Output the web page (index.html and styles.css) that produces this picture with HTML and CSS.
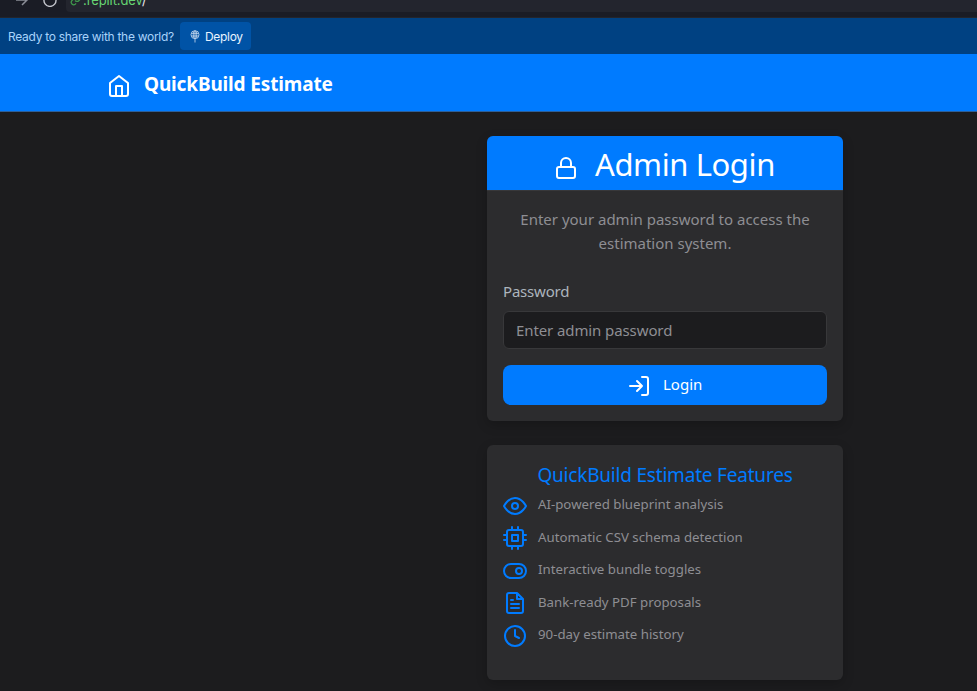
FILE: index.html
```
<!DOCTYPE html>
<html lang="en">
<head>
<meta charset="utf-8">
<title>QuickBuild Estimate</title>
<link rel="stylesheet" href="styles.css">
</head>
<body>
<div class="browser">
  <svg class="nav-arrow" width="14" height="14" viewBox="0 0 14 14"><path d="M1 7h11M7 2l5 5-5 5"/></svg>
  <svg class="reload" width="14" height="14" viewBox="0 0 14 14"><path d="M1.300 5.500a6 6 0 1 0 11.500.4"/></svg>
  <div class="address">
    <svg class="link" width="12" height="12" viewBox="0 0 24 24"><path d="M10 13a5 5 0 0 0 7.500.5l3-3a5 5 0 0 0-7-7l-1.700 1.700M14 11a5 5 0 0 0-7.500-.5l-3 3a5 5 0 0 0 7 7l1.700-1.700"/></svg>
    <span class="url">.replit.dev<span class="slash">/</span></span>
  </div>
</div>
<div class="deploy-bar">
  <span class="ready">Ready to share with the world?</span>
  <button class="deploy">
    <svg width="10" height="13" viewBox="0 0 10 13"><circle cx="5" cy="4.700" r="4"/><ellipse cx="5" cy="4.700" rx="1.700" ry="4"/><path d="M1.300 3.400h7.400M1.300 6h7.400M5 1v11.500"/></svg>
    <span class="deploy-text">Deploy</span>
  </button>
</div>
<header class="header">
  <svg class="icon" viewBox="0 0 24 24"><path d="M3 9l9-7 9 7v11a2 2 0 0 1-2 2H5a2 2 0 0 1-2-2z"/><path d="M9 22V12h6v10"/></svg>
  <span class="brand">QuickBuild Estimate</span>
</header>
<main class="main">
  <section class="card login-card">
    <h2 class="login-title">
      <svg class="icon" viewBox="0 0 24 24"><rect x="3" y="11" width="18" height="11" rx="2"/><path d="M7 11V7a5 5 0 0 1 10 0v4"/></svg>
      <span class="login-heading">Admin Login</span>
    </h2>
    <form class="login-body">
      <p class="intro">Enter your admin password to access the estimation system.</p>
      <label class="label" for="pw">Password</label>
      <input class="input" id="pw" type="password" placeholder="Enter admin password">
      <button class="submit" type="button">
        <svg class="icon" viewBox="0 0 24 24"><path d="M15 3h4a2 2 0 0 1 2 2v14a2 2 0 0 1-2 2h-4M10 17l5-5-5-5M15 12H3"/></svg>
        <span class="submit-text">Login</span>
      </button>
    </form>
  </section>
  <section class="card features">
    <h3 class="features-title">QuickBuild Estimate Features</h3>
    <ul class="list">
      <li><svg class="icon" viewBox="0 0 24 24"><path d="M1 12s4-8 11-8 11 8 11 8-4 8-11 8-11-8-11-8z"/><circle cx="12" cy="12" r="3"/></svg><span>AI-powered blueprint analysis</span></li>
      <li><svg class="icon" viewBox="0 0 24 24"><rect x="4" y="4" width="16" height="16" rx="2"/><path d="M9 9h6v6H9zM9 1v3M15 1v3M9 20v3M15 20v3M20 9h3M20 14h3M1 9h3M1 14h3"/></svg><span>Automatic CSV schema detection</span></li>
      <li><svg class="icon" viewBox="0 0 24 24"><rect x="1" y="5" width="22" height="14" rx="7"/><circle cx="16" cy="12" r="3"/></svg><span>Interactive bundle toggles</span></li>
      <li><svg class="icon" viewBox="0 0 24 24"><path d="M14 2H6a2 2 0 0 0-2 2v16a2 2 0 0 0 2 2h12a2 2 0 0 0 2-2V8zM14 2v6h6M16 13H8M16 17H8M10 9H8"/></svg><span>Bank-ready PDF proposals</span></li>
      <li><svg class="icon" viewBox="0 0 24 24"><circle cx="12" cy="12" r="10"/><path d="M12 6v6l4 2"/></svg><span>90-day estimate history</span></li>
    </ul>
  </section>
</main>
</body>
</html>
```
FILE: styles.css
```
* { box-sizing: border-box; }
html, body { height: 100%; }
body {
  margin: 0;
  background: #1c1c1e;
  font: 15px/24px "Noto Sans", "Open Sans", sans-serif;
  overflow: hidden;
}
svg { fill: none; flex: none; }
span { white-space: nowrap; }
button { border: 0; font: inherit; }
.icon {
  width: 24px;
  height: 24px;
  stroke: currentColor;
  stroke-width: 2;
  stroke-linecap: round;
  stroke-linejoin: round;
}

.browser {
  height: 18px;
  display: flex;
  align-items: flex-start;
  padding-left: 15px;
  background: #1a1c25;
  border-bottom: 1px solid #23252c;
  overflow: hidden;
}
.nav-arrow { margin-top: -7px; stroke: #8a8d97; stroke-width: 1.5; }
.reload { margin: -7px 0 0 14px; stroke: #c5c7ce; stroke-width: 1.4; }
.address {
  flex: 1;
  display: flex;
  height: 12px;
  margin-left: 9px;
  padding-left: 4px;
  background: #23252e;
  border-bottom-left-radius: 4px;
}
.link { margin-top: -6px; stroke: #3f9a4c; stroke-width: 2.5; }
.url {
  margin: -8px 0 0 1px;
  font: 13px/16px Inter, sans-serif;
  letter-spacing: -.1px;
  color: #66d472;
}
.slash { color: #e8e8ea; }

.deploy-bar {
  height: 36px;
  display: flex;
  align-items: center;
  padding-left: 8px;
  background: #004182;
  font-family: Inter, sans-serif;
  font-size: 12px;
  letter-spacing: -.29px;
}
.ready { width: 172px; padding-top: 2px; color: #a8d3fb; }
.deploy {
  display: flex;
  align-items: center;
  gap: 5px;
  width: 71px;
  height: 28px;
  padding: 0 0 0 10px;
  border-radius: 4px;
  background: #0053a6;
  color: #e8f3ff;
  letter-spacing: -.3px;
}
.deploy-text { padding-top: 2px; }
.deploy svg { stroke: #b5cde8; stroke-width: .9; }

.header {
  height: 58px;
  display: flex;
  align-items: center;
  gap: 13px;
  padding: 7px 0 0 107px;
  background: #007bff;
  border-bottom: 1px solid #2d5f99;
  color: #fff;
}
.brand { font-size: 19px; font-weight: 700; line-height: 30px; margin-top: -4px; letter-spacing: -.15px; }

.main {
  display: flex;
  flex-direction: column;
  gap: 24px;
  width: 356px;
  margin: 24px 0 0 487px;
}
.card {
  border-radius: 6px;
  background: #2c2c2e;
  box-shadow: 0 4px 12px rgba(0, 0, 0, .2);
  overflow: hidden;
}
.login-card { height: 285px; }
.login-title {
  height: 55px;
  margin: 0;
  display: flex;
  align-items: center;
  padding: 4px 0 0 67px;
  gap: 17px;
  background: #007bff;
  border-bottom: 1px solid #38383a;
  color: #fff;
  font-weight: 400;
}
.login-title .icon { margin-top: 5px; }
.login-heading { margin-top: -2px; font-size: 31px; line-height: 40px; letter-spacing: -.4px; }
.login-body { padding: 16px; }
.intro { margin: 0 0 24px; text-align: center; color: #8e8e93; }
.label { display: block; margin-bottom: 8px; color: #adb5bd; letter-spacing: -.2px; }
.input {
  display: block;
  width: 324px;
  height: 38px;
  padding: 0 12px;
  border: 1px solid #38383a;
  border-radius: 6px;
  background: #1c1c1e;
  font: inherit;
  letter-spacing: -.1px;
}
.input::placeholder { color: #8e8e93; opacity: 1; }
.submit {
  display: flex;
  align-items: center;
  gap: 12px;
  width: 324px;
  height: 40px;
  margin-top: 16px;
  padding: 0 0 0 124px;
  border-radius: 8px;
  background: #007bff;
  color: #fff;
}
.submit .icon { margin-top: 2px; }
.submit-text { margin-top: -2px; }

.features { height: 235px; padding: 18px 16px 0; }
.features-title {
  margin: 0 0 4.8px;
  text-align: center;
  font-size: 19px;
  font-weight: 400;
  line-height: 24px;
  letter-spacing: -.2px;
  color: #007bff;
  white-space: nowrap;
}
.list { margin: 0; padding: 0; list-style: none; }
.list li {
  display: flex;
  gap: 11px;
  height: 32.5px;
  font-size: 13.25px;
  line-height: 24px;
  color: #8e8e93;
}
.list span { padding-top: .3px; }
.list .icon { color: #007bff; margin-top: 2px; }
```
